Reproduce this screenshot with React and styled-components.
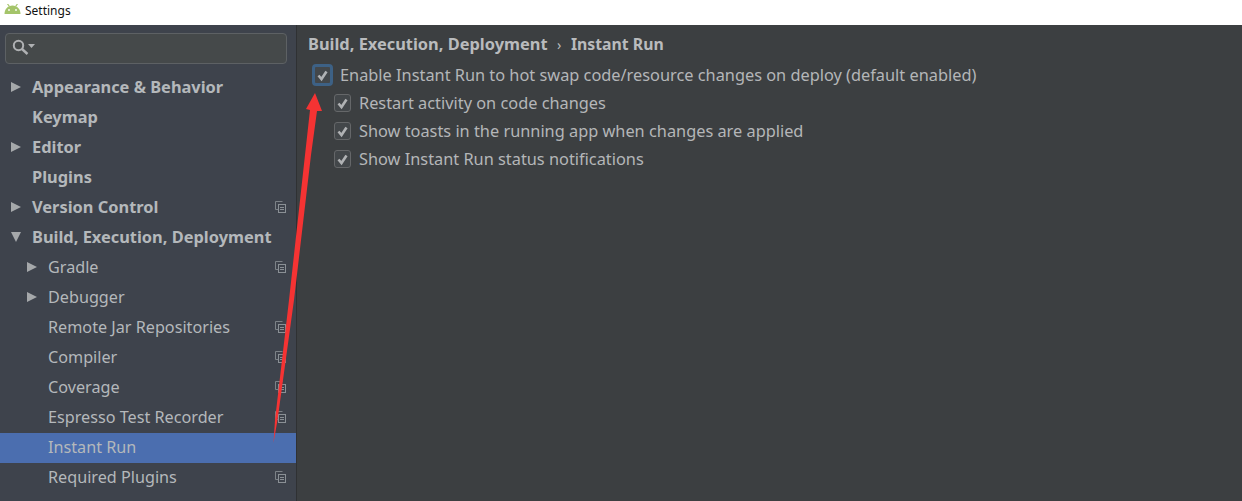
import styled, { createGlobalStyle } from "styled-components";

const GlobalStyle = createGlobalStyle`
  html, body {
    margin: 0;
    padding: 0;
    background: #3c3f41;
  }
  body {
    font-family: "Noto Sans", "Open Sans", sans-serif;
  }
`;

const tree = [
  { label: "Appearance & Behavior", bold: true, arrow: "right" },
  { label: "Keymap", bold: true },
  { label: "Editor", bold: true, arrow: "right" },
  { label: "Plugins", bold: true },
  { label: "Version Control", bold: true, arrow: "right", project: true },
  { label: "Build, Execution, Deployment", bold: true, arrow: "down" },
  { label: "Gradle", arrow: "right", project: true, child: true },
  { label: "Debugger", arrow: "right", child: true },
  { label: "Remote Jar Repositories", project: true, child: true },
  { label: "Compiler", project: true, child: true },
  { label: "Coverage", project: true, child: true },
  { label: "Espresso Test Recorder", project: true, child: true },
  { label: "Instant Run", child: true, selected: true },
  { label: "Required Plugins", project: true, child: true },
  { label: "Languages & Frameworks", bold: true, arrow: "right" },
];

const options = [
  "Restart activity on code changes",
  "Show toasts in the running app when changes are applied",
  "Show Instant Run status notifications",
];

const AndroidIcon = () => (
  <LogoSvg width="17" height="10" viewBox="0 0 17 10">
    <path d="M3.5 0 L5.5 2.5 M13.5 0 L11.5 2.5" stroke="#a4c46a" strokeWidth="1.2" fill="none" />
    <path d="M0.5 10 C0.5 5 4 1.5 8.5 1.5 C13 1.5 16.5 5 16.5 10 Z" fill="#a4c46a" />
    <circle cx="5" cy="6" r="0.9" fill="#fff" />
    <circle cx="12" cy="6" r="0.9" fill="#fff" />
  </LogoSvg>
);

const SearchIcon = () => (
  <svg width="24" height="17" viewBox="0 0 24 17">
    <circle cx="6.5" cy="6.5" r="4.7" fill="none" stroke="#afb1b3" strokeWidth="2" />
    <path d="M10 10 L15.5 15" stroke="#afb1b3" strokeWidth="2.4" />
    <path d="M16 5 H23 L19.5 9 Z" fill="#afb1b3" />
  </svg>
);

const ProjectIcon = () => (
  <svg width="11" height="12" viewBox="0 0 11 12">
    <path d="M7.5 0.5 H0.5 V8.5 H3" fill="none" stroke="#7c8287" />
    <rect x="3.5" y="3.5" width="7" height="8" fill="none" stroke="#8a9095" />
    <path d="M5 6.5 H9 M5 8.5 H9" stroke="#8a9095" />
  </svg>
);

const CheckMark = () => (
  <svg width="13" height="13" viewBox="0 0 13 13">
    <path d="M2.5 6.5 L5.5 10 L10.5 2.5" fill="none" stroke="#b0b2b4" strokeWidth="2.6" />
  </svg>
);

const Arrow = () => (
  <svg width="60" height="360" viewBox="0 0 60 360">
    <path
      d="M44 3 L35 19 L39 20 L34 65 L18 210 L4 330 L2.5 353 L6.5 330 L23 210 L40 65 L46 21 L51 21 Z"
      fill="#f53333"
    />
  </svg>
);

const App = () => {
  return (
    <Page>
      <GlobalStyle />
      <TitleBar>
        <AndroidIcon />
        <TitleText>Settings</TitleText>
      </TitleBar>
      <Body>
        <Sidebar>
          <SearchBox>
            <SearchIcon />
          </SearchBox>
          <Tree>
            {tree.map((item) => (
              <Row key={item.label} $selected={item.selected} $child={item.child}>
                <Toggle>
                  {item.arrow && <Triangle $down={item.arrow === "down"} />}
                </Toggle>
                <RowLabel $bold={item.bold}>{item.label}</RowLabel>
                {item.project && (
                  <ProjectSlot>
                    <ProjectIcon />
                  </ProjectSlot>
                )}
              </Row>
            ))}
          </Tree>
        </Sidebar>
        <Content>
          <Breadcrumb>
            <strong>Build, Execution, Deployment</strong>
            <Separator>›</Separator>
            <CrumbCurrent>Instant Run</CrumbCurrent>
          </Breadcrumb>
          <MainOption>
            <FocusedCheck>
              <CheckMark />
            </FocusedCheck>
            <OptionText>
              Enable Instant Run to hot swap code/resource changes on deploy (default enabled)
            </OptionText>
          </MainOption>
          {options.map((text) => (
            <SubOption key={text}>
              <CheckBox>
                <CheckMark />
              </CheckBox>
              <OptionText>{text}</OptionText>
            </SubOption>
          ))}
        </Content>
      </Body>
      <ArrowLayer>
        <Arrow />
      </ArrowLayer>
    </Page>
  );
};

const Page = styled.div`
  position: relative;
  width: 1242px;
  height: 501px;
  overflow: hidden;
`;
const TitleBar = styled.div`
  display: flex;
  align-items: center;
  gap: 4px;
  height: 25px;
  padding: 0 0 5px 4px;
  box-sizing: border-box;
  background: #fff;
`;
const LogoSvg = styled.svg`
  margin-bottom: 3px;
`;
const TitleText = styled.span`
  font-size: 12px;
  color: #111;
`;
const Body = styled.div`
  display: flex;
  height: 476px;
`;
const Sidebar = styled.div`
  width: 296px;
  flex: none;
  background: #3e434c;
  border-right: 1px solid #2f3133;
  padding-top: 8px;
  overflow: hidden;
`;
const SearchBox = styled.div`
  display: flex;
  align-items: center;
  box-sizing: border-box;
  width: 282px;
  height: 31px;
  margin-left: 5px;
  padding: 0 0 2px 6px;
  background: #45494a;
  border: 1px solid #5d6164;
  border-radius: 4px;
`;
const Tree = styled.div`
  margin-top: 9px;
`;
const Row = styled.div`
  display: flex;
  align-items: center;
  box-sizing: border-box;
  height: 30px;
  padding: 0 0 2px ${(p) => (p.$child ? "27px" : "11px")};
  background: ${(p) => (p.$selected ? "#4b6eaf" : "transparent")};
`;
const Toggle = styled.div`
  display: flex;
  align-items: center;
  width: 21px;
  flex: none;
`;
const Triangle = styled.div`
  width: 0;
  height: 0;
  ${(p) =>
    p.$down
      ? `border-left: 5.5px solid transparent;
         border-right: 5.5px solid transparent;
         border-top: 10px solid #a5a8aa;`
      : `border-top: 5.5px solid transparent;
         border-bottom: 5.5px solid transparent;
         border-left: 10px solid #a5a8aa;`}
`;
const RowLabel = styled.span`
  flex: 1;
  font-size: ${(p) => (p.$bold ? "16.4px" : "16.2px")};
  line-height: 22px;
  font-weight: ${(p) => (p.$bold ? 700 : 400)};
  color: #b4b8bb;
  white-space: nowrap;
`;
const ProjectSlot = styled.div`
  display: flex;
  width: 21px;
  flex: none;
`;
const Content = styled.div`
  flex: 1;
  padding: 7px 0 0 11px;
  color: #bbbbbb;
`;
const Breadcrumb = styled.div`
  display: flex;
  align-items: baseline;
  height: 24px;
  font-size: 16.4px;
  color: #b9bbbd;
  strong {
    font-weight: 700;
  }
`;
const CrumbCurrent = styled.strong`
  font-size: 15.8px;
`;
const Separator = styled.span`
  margin: 0 9.5px;
  font-size: 14px;
`;
const MainOption = styled.div`
  display: flex;
  align-items: center;
  gap: 7px;
  height: 28px;
  margin: 5px 0 0 4px;
`;
const SubOption = styled.div`
  display: flex;
  align-items: center;
  gap: 8px;
  height: 28px;
  margin-left: 26px;
`;
const CheckBox = styled.div`
  display: flex;
  align-items: center;
  justify-content: center;
  box-sizing: border-box;
  width: 17px;
  height: 18px;
  background: #43474a;
  border: 1px solid #656769;
  border-radius: 3px;
`;
const FocusedCheck = styled(CheckBox)`
  width: 21px;
  height: 22px;
  border: 3px solid #3d6185;
  border-radius: 4px;
`;
const OptionText = styled.span`
  font-size: 16.34px;
  color: #b4b6b8;
  white-space: nowrap;
`;
const ArrowLayer = styled.div`
  position: absolute;
  left: 271px;
  top: 90px;
  line-height: 0;
`;

export default App;
